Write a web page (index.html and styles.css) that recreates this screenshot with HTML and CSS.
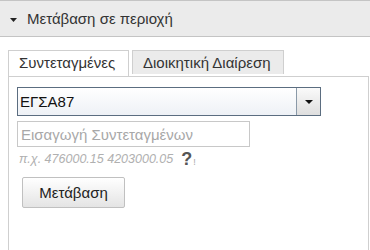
FILE: index.html
```html
<!DOCTYPE html>
<html lang="el">
<head>
    <meta charset="UTF-8">
    <title>Μετάβαση σε περιοχή</title>
    <link rel="stylesheet" href="styles.css">
</head>
<body>
    <div class="widget">
        <div class="widget-header">
            <svg class="caret" width="7" height="4" viewBox="0 0 7 4"><path d="M0 0h7L3.5 4z" fill="#222"/></svg>
            <span>Μετάβαση σε περιοχή</span>
        </div>

        <div class="widget-body">
            <ul class="tabs">
                <li class="tab active">Συντεταγμένες</li>
                <li class="tab">Διοικητική Διαίρεση</li>
            </ul>

            <div class="tab-panel">
                <div class="select">
                    <span class="select-value">ΕΓΣΑ87</span>
                    <span class="select-btn">
                        <svg width="8" height="4" viewBox="0 0 8 4"><path d="M0 0h8L4 4z" fill="#111"/></svg>
                    </span>
                </div>

                <input class="coord-input" type="text" placeholder="Εισαγωγή Συντεταγμένων">

                <div class="hint">
                    <span>π.χ. 476000.15 4203000.05</span>
                    <span class="help">?<small>!</small></span>
                </div>

                <button class="btn">Μετάβαση</button>
            </div>
        </div>
    </div>
</body>
</html>
```

FILE: styles.css
```css
* {
    margin: 0;
    padding: 0;
    box-sizing: border-box;
}

body {
    font-family: "Liberation Sans", Arial, sans-serif;
    background: #fff;
    color: #333;
    width: 370px;
    height: 250px;
    overflow: hidden;
}

.widget-header {
    display: flex;
    align-items: center;
    gap: 6px;
    height: 37px;
    padding: 0 0 0 10px;
    background: #ebebeb;
    border-top: 1px solid #c4c4c4;
    border-bottom: 1px solid #c4c4c4;
    font-size: 15px;
    color: #333;
}

.caret {
    margin-top: 2px;
    margin-right: 4px;
}

.widget-body {
    padding: 13px 1px 0 8px;
}

.tabs {
    display: flex;
    gap: 3px;
    list-style: none;
    position: relative;
    z-index: 1;
}

.tab {
    height: 25px;
    padding: 0 10px;
    line-height: 24px;
    font-size: 15px;
    color: #333;
    background: #ebebeb;
    border: 1px solid #cfcfcf;
    border-bottom: none;
}

.tab:first-child {
    width: 121px;
}

.tab:last-child {
    width: 152px;
    height: 24px;
}

.tab.active {
    background: #fff;
    height: 26px;
}

.tab-panel {
    border: 1px solid #cfcfcf;
    border-bottom: none;
    height: 175px;
    padding: 10px 8px;
}

.select {
    display: flex;
    width: 304px;
    height: 29px;
    border: 1px solid #5b6d80;
    background: linear-gradient(#fff, #eef1f6);
}

.select-value {
    flex: 1;
    padding-left: 2px;
    line-height: 27px;
    font-size: 15px;
    color: #111;
}

.select-btn {
    display: flex;
    align-items: center;
    justify-content: center;
    width: 24px;
    border-left: 1px solid #8a99a8;
    background: linear-gradient(#fafafa, #dedede);
}

.coord-input {
    display: block;
    width: 233px;
    height: 26px;
    margin-top: 5px;
    padding: 0 3px;
    border: 1px solid #c8c8c8;
    font-family: inherit;
    font-size: 15px;
    color: #333;
    outline: none;
}

.coord-input::placeholder {
    color: #a8a8a8;
}

.hint {
    display: flex;
    align-items: center;
    gap: 8px;
    height: 20px;
    margin-top: 2px;
    padding-left: 2px;
    font-size: 12.5px;
    font-style: italic;
    color: #b0b0b0;
}

.help {
    font-style: normal;
    font-weight: bold;
    font-size: 18px;
    color: #555;
}

.help small {
    font-size: 9px;
    font-weight: normal;
    color: #aaa;
    margin-left: 1px;
}

.btn {
    display: block;
    width: 103px;
    height: 31px;
    margin: 8px 0 0 5px;
    font-family: inherit;
    font-size: 15px;
    color: #222;
    background: linear-gradient(#fff, #e4e4e4);
    border: 1px solid #c0c0c0;
    border-radius: 2px;
}
```
